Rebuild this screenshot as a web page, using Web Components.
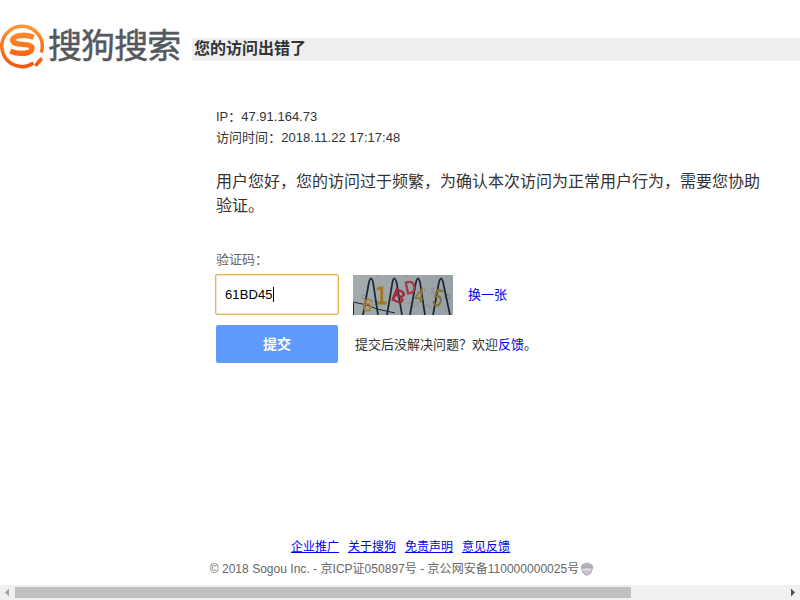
<!DOCTYPE html>
<html lang="zh-CN">
<head>
<meta charset="utf-8">
<title>搜狗搜索</title>
<style>
html,body{margin:0;padding:0;background:#fff}
body{width:800px;height:600px;overflow:hidden;font-family:"Liberation Sans","Noto Sans CJK SC",sans-serif;font-size:13px;color:#333}
</style>
</head>
<body>
<error-page></error-page>
<script>
function define(name, html){
  const t=document.createElement('template');
  t.innerHTML=html;
  customElements.define(name, class extends HTMLElement{
    constructor(){super();this.attachShadow({mode:'open'}).append(t.content.cloneNode(true));}
  });
}

define('sogou-logo',`
<style>
:host{display:flex;width:192px;height:48px;align-items:flex-start}
svg{flex:none;width:48px;height:48px}
span{font-size:34px;line-height:48px;height:48px;letter-spacing:-.9px;color:#55595f;white-space:nowrap;-webkit-text-stroke:.5px #55595f}
</style>
<svg viewBox="0 0 48 48">
<defs><linearGradient id="g" x1="0" y1="0" x2="0" y2="46" gradientUnits="userSpaceOnUse"><stop offset="0" stop-color="#ff9c3a"/><stop offset="1" stop-color="#fd5205"/></linearGradient></defs>
<g fill="none" stroke="url(#g)">
<path d="M33.5 41A20.2 20.2 0 1 1 41.3 30.5" stroke-width="3.5"/>
<path d="M33.800 15.2C27 12.900 20 13 16 14.600C10.500 17 12 20.700 18 21.800C24 22.800 31.800 22 32 26.200C32 32 19.500 32.800 10.300 29.300" stroke-width="5.4"/>
<path d="M38 40.6L40.8 37.6" stroke-width="3.8" stroke-linecap="round"/>
</g>
<circle cx="36.600" cy="42.6" r="1.9" fill="#fd5205"/>
</svg><span>搜狗搜索</span>`);

define('page-header',`
<style>
:host{display:flex;padding-top:22px;height:48px}
h1{flex:1;margin:16px 0 0;height:23px;line-height:21px;padding-left:2px;font-size:16px;font-weight:700;background:#eee;color:#333}
</style>
<sogou-logo></sogou-logo><h1><slot></slot></h1>`);

define('visit-info',`
<style>
:host{display:block;line-height:21px;height:42px;white-space:nowrap}
div{height:21px}
.time{letter-spacing:.04px}
</style>
<div>IP：47.91.164.73</div><div class="time">访问时间：2018.11.22 17:17:48</div>`);

define('captcha-image',`
<style>:host{display:block;width:100px;height:40px}svg{display:block}text{font-family:"Liberation Sans",sans-serif}.one{font-family:"DejaVu Sans",sans-serif}</style>
<svg width="100" height="40" viewBox="0 0 100 40">
<defs><linearGradient id="b" x1="0" y1="0" x2="1" y2=".2"><stop offset="0" stop-color="#a2acac"/><stop offset="1" stop-color="#98a1a4"/></linearGradient><filter id="f"><feGaussianBlur stdDeviation=".3"/></filter></defs>
<rect width="100" height="40" fill="url(#b)"/>
<g filter="url(#f)">
<g fill="none" stroke="#818b8c" stroke-width="1"><path d="M24 2l2-2M52 1l5-2M73 29l6 4M91 20h7M71 12l1 5M78 14q3-2 3 1l-3 3h4M55 29q4-3 3 1t4 1M61 28q4-2 4 1t-3 1"/><circle cx="11" cy="22" r="2"/><circle cx="94" cy="22" r="2.5"/><circle cx="21" cy="28" r="2"/></g>
<g fill="none" stroke="#1c2637" stroke-width="1.7">
<path d="M10 40L16 7Q18 0 20 7L25 40M34 40L39.500 7Q41 0 43.500 7L49 40M57 40L63 7Q65 0 67 7L72 40M80 40L86 7Q88 0 90 7L97 40"/>
<path d="M0 27L14 30 24 34 42 38" stroke-width="1"/><path d="M.5 28v12" stroke-width="1"/></g>
<g stroke-width=".4">
<text x="9.500" y="36" font-size="18" fill="#b07a2a" stroke="#b07a2a" transform="rotate(12 14 30)">6</text>
<text class="one" x="22" y="29" font-size="23" fill="#a3771b" textLength="13" lengthAdjust="spacingAndGlyphs" stroke="#a3771b" stroke-width="1">1</text>
<text x="39" y="27.500" font-size="19" font-weight="700" fill="#a3293a" transform="rotate(22 45 21)">B</text>
<text x="52" y="18.500" font-size="18" fill="#a43745" stroke="#a43745" textLength="11" lengthAdjust="spacingAndGlyphs" stroke-width=".9" transform="rotate(-12 57 13)">D</text>
<text x="62" y="27" font-size="20" fill="#8f7335" stroke="#8f7335" textLength="9" lengthAdjust="spacingAndGlyphs" transform="rotate(8 66 20)">4</text>
<text x="80" y="31" font-size="24" fill="#857037" stroke="#857037" textLength="10" lengthAdjust="spacingAndGlyphs" transform="rotate(14 85 23)">5</text>
</g></g></svg>`);

define('code-input',`
<style>
:host{display:flex;box-sizing:border-box;width:124px;height:41px;margin:-1px 0 0 -1px;border:1.5px solid #e5b554;box-shadow:inset 0 0 0 .5px #edc878;border-radius:2px;align-items:center;padding:0 0 1px 9px;color:#000;background:#fff;letter-spacing:.12px}
i{width:1px;height:15px;background:#000}
</style><slot></slot><i></i>`);

define('submit-button',`
<style>
:host{display:block;width:122px;height:38px;background:#5f9afd;border-radius:2px}
button{all:unset;display:block;width:100%;height:38px;line-height:37px;text-align:center;color:#fff;font-weight:700;font-size:14px;cursor:pointer}
</style><button><slot></slot></button>`);

define('verify-form',`
<style>
:host{display:block}
label{display:block;height:25px;line-height:20px;color:#666}
.row{display:flex;height:40px;align-items:flex-start}
.row>a{margin-left:15px;line-height:39px}
captcha-image{margin-left:14px}
.row+.row{margin-top:10px;height:38px}
.row p{margin:0 0 0 17px;line-height:39px}
a{color:#00e;text-decoration:none}
</style>
<label>验证码：</label>
<div class="row"><code-input>61BD45</code-input><captcha-image></captcha-image><a href="#">换一张</a></div>
<div class="row"><submit-button>提交</submit-button><p>提交后没解决问题？欢迎<a href="#">反馈</a>。</p></div>`);

define('police-badge',`
<style>:host{display:block;width:14px;height:14px;margin-left:1px}svg{display:block}</style>
<svg width="14" height="14" viewBox="0 0 14 14"><path d="M7 .4L10 1.6 12.6 3 13.2 6 12.4 8C12 11 9.5 12.8 7 13.8C4.5 12.8 2 11 1.6 8L.8 6 1.4 3 4 1.6Z" fill="#b2acb4"/><path d="M2.4 6.2Q7 4.6 11.6 6.2L11 8.7Q10 11 7 12Q4 11 3 8.7Z" fill="#e0d6e6"/><path d="M3 6.2Q7 5 11 6.2M4.500 9.500Q7 10.5 9.500 9.500" fill="none" stroke="#a098a6" stroke-width=".7"/><path d="M4 3.3L7 2.2 10 3.3" fill="none" stroke="#c9c1cc" stroke-width=".8"/></svg>`);

define('page-footer',`
<style>
:host{display:flex;flex-direction:column;align-items:center;font-size:12px;color:#666}
nav{display:flex;gap:9px;height:22px;line-height:22px;padding-left:1px}
a{color:#00e;text-decoration:underline}
.copy{display:flex;align-items:center;height:22px;line-height:22px;white-space:nowrap;padding-left:4px;letter-spacing:.025px}
</style>
<nav><a href="#">企业推广</a><a href="#">关于搜狗</a><a href="#">免责声明</a><a href="#">意见反馈</a></nav>
<div class="copy"><span>© 2018 Sogou Inc. - 京ICP证050897号 - 京公网安备110000000025号</span><police-badge></police-badge></div>`);

define('scroll-bar',`
<style>
:host{display:flex;align-items:center;height:15px;background:#f0f0f0}
svg{flex:none;width:15px;height:15px}
.track{flex:1;height:11px}
.thumb{width:616px;height:11px;background:#c0c0c0}
</style>
<svg viewBox="0 0 15 15"><path d="M5 7.5L9 3.5V11.5Z" fill="#a3a3a3"/></svg><div class="track"><div class="thumb"></div></div><svg viewBox="0 0 15 15"><path d="M10 7.5L6 3.5V11.5Z" fill="#505050"/></svg>`);

define('error-page',`
<style>
:host{display:flex;flex-direction:column;width:800px;height:600px}
main{flex:1;padding:36px 0 0 216px}
.message{margin:22px 0 0;width:550px;height:48px;font-size:16px;line-height:24px}
verify-form{margin-top:32px}
page-footer{height:49px}
</style>
<page-header>您的访问出错了</page-header>
<main>
<visit-info></visit-info>
<p class="message">用户您好，您的访问过于频繁，为确认本次访问为正常用户行为，需要您协助验证。</p>
<verify-form></verify-form>
</main>
<page-footer></page-footer>
<scroll-bar></scroll-bar>`);
</script>
</body>
</html>
